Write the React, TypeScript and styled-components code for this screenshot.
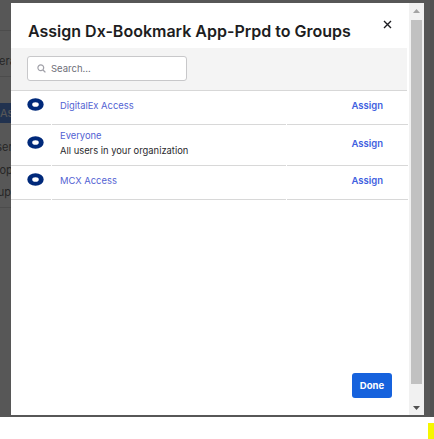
import React from 'react';
import styled, {createGlobalStyle} from 'styled-components';

const GlobalStyle = createGlobalStyle`
  html, body {
    margin: 0;
    padding: 0;
    background: #ffffff;
    font-family: Inter, "Liberation Sans", sans-serif;
    color: #1d1d21;
  }
`;

const Screen = styled.div`
  position: relative;
  height: 417px;
  overflow: hidden;
  display: flex;
`;

// page that sits behind the dimmed overlay
const PageNav = styled.div`
  display: flex;
  flex-direction: column;
  margin-left: -22px;
  width: 140px;
  padding-top: 30px;
`;

const NavTop = styled.div`
  border-top: 1px solid #d0d0d0;
  border-bottom: 1px solid #d0d0d0;
  height: 47px;
  box-sizing: border-box;
  padding-bottom: 8px;
  display: flex;
  align-items: flex-end;
  font-size: 11px;
  white-space: nowrap;
  color: #2a2a2a;
`;

const NavButton = styled.div`
  margin-top: 26px;
  height: 20px;
  line-height: 20px;
  background: #1662dd;
  color: #ffffff;
  font-size: 11px;
  padding-left: 22px;
  white-space: nowrap;
`;

const NavList = styled.div`
  display: flex;
  flex-direction: column;
  padding-top: 13px;
  border-bottom: 1px solid #d0d0d0;
  padding-bottom: 3px;
`;

const NavItem = styled.div<{ $indent: number }>`
  font-size: 11px;
  line-height: 22.5px;
  white-space: nowrap;
  padding-left: ${p => p.$indent}px;
  color: #2a2a2a;
`;

const PageMain = styled.div`
  flex: 1;
`;

const PageScroll = styled.div`
  width: 4px;
  background: #e6e6e6;
`;

const Overlay = styled.div`
  position: absolute;
  inset: 0;
  background: rgba(36, 36, 36, 0.77);
`;

const Modal = styled.div`
  position: absolute;
  left: 11px;
  top: 3px;
  width: 413px;
  height: 412px;
  background: #ffffff;
  display: flex;
`;

const ModalBody = styled.div`
  flex: 1;
  display: flex;
  flex-direction: column;
  overflow: hidden;
`;

const Header = styled.div`
  height: 45px;
  flex-shrink: 0;
  display: flex;
  align-items: center;
  justify-content: space-between;
  padding: 0 17px;
  box-sizing: border-box;
`;

const Title = styled.h2`
  margin: 0;
  padding-top: 10px;
  font-size: 16px;
  font-weight: 600;
  color: #1d1d21;
  white-space: nowrap;
`;

const CloseButton = styled.button`
  border: 0;
  background: none;
  padding: 0;
  margin-top: -2px;
  width: 10px;
  height: 10px;
  display: flex;
  align-items: center;
  justify-content: center;
  cursor: pointer;
`;

const SearchBar = styled.div`
  background: #f4f4f4;
  border-bottom: 1px solid #d7d7d7;
  padding: 8px 16px 9px;
  margin-right: 2px;
`;

const SearchField = styled.label`
  width: 160px;
  height: 25px;
  box-sizing: border-box;
  border: 1px solid #c8c8ca;
  border-radius: 3px;
  background: #ffffff;
  display: flex;
  align-items: center;
  gap: 5px;
  padding-left: 9px;
`;

const SearchInput = styled.input`
  border: 0;
  outline: none;
  padding: 0;
  font-family: inherit;
  font-size: 9.5px;
  width: 100px;
  color: #1d1d21;

  &::placeholder {
    color: #6e6e78;
  }
`;

const Row = styled.div`
  display: grid;
  grid-template-columns: 40px 234px 121px;
  column-gap: 1px;
`;

const Cell = styled.div<{ $align?: 'start' | 'end' }>`
  border-bottom: 1px solid #d8d8d8;
  min-height: 34px;
  box-sizing: border-box;
  padding: 3px 0 7px;
  display: flex;
  flex-direction: column;
  justify-content: center;
  align-items: ${p => (p.$align === 'end' ? 'flex-end' : 'flex-start')};
`;

const RadioCell = styled(Cell)`
  padding-left: 16px;
  padding-bottom: 9px;
`;

const NameCell = styled(Cell)`
  padding-left: 8px;
`;

const ActionCell = styled(Cell)`
  padding-right: 25px;
`;

const GroupName = styled.a`
  font-size: 9.4px;
  line-height: 15px;
  color: #5363d3;
  text-decoration: none;
`;

const GroupDesc = styled.div`
  font-size: 9.4px;
  line-height: 15px;
  color: #2a2a2e;
`;

const AssignLink = styled.a`
  font-size: 9.5px;
  line-height: 15px;
  font-weight: 600;
  color: #3f5fe0;
  text-decoration: none;
`;

const Footer = styled.div`
  margin-top: auto;
  display: flex;
  justify-content: flex-end;
  padding: 0 17px 17px;
`;

const DoneButton = styled.button`
  width: 40px;
  height: 25px;
  border: 0;
  border-radius: 3px;
  background: #1662dd;
  color: #ffffff;
  font-family: inherit;
  font-size: 9.5px;
  font-weight: 700;
  cursor: pointer;
`;

const ScrollRail = styled.div`
  width: 15px;
  flex-shrink: 0;
  background: #f1f1f1;
  display: flex;
  flex-direction: column;
`;

const ScrollArrow = styled.div`
  height: 15px;
  flex-shrink: 0;
  display: flex;
  align-items: center;
  justify-content: center;
`;

const ScrollThumb = styled.div`
  height: 364px;
  margin: 2px 2px 0;
  background: #c1c1c1;
`;

const ScrollTrack = styled.div`
  flex: 1;
`;

const BottomStrip = styled.div`
  display: flex;
  justify-content: flex-end;
  padding-top: 6px;
`;

const Marker = styled.div`
  width: 6px;
  height: 16px;
  background: #f6f600;
`;

const GroupIcon: React.FC = () => (
  <svg width="17" height="13" viewBox="0 0 17 13">
    <path
      fillRule="evenodd"
      fill="#00297a"
      d="M8.5 0.3A8.2 6.2 0 1 1 8.5 12.7A8.2 6.2 0 1 1 8.5 0.3ZM8.5 4.2A3.3 2.3 0 1 0 8.5 8.8A3.3 2.3 0 1 0 8.5 4.2Z"
    />
  </svg>
);

const SearchIcon: React.FC = () => (
  <svg width="9" height="9" viewBox="0 0 9 9">
    <circle cx="3.8" cy="3.8" r="2.9" fill="none" stroke="#a0a0a8" strokeWidth="1.2" />
    <line x1="6" y1="6" x2="8.4" y2="8.4" stroke="#a0a0a8" strokeWidth="1.3" />
  </svg>
);

const CloseIcon: React.FC = () => (
  <svg width="9" height="9" viewBox="0 0 9 9">
    <path d="M1 1L8 8M8 1L1 8" stroke="#1d1d21" strokeWidth="1.4" />
  </svg>
);

const ArrowIcon: React.FC<{ down?: boolean; color: string }> = ({down, color}) => (
  <svg width="7" height="4" viewBox="0 0 7 4">
    <path d={down ? 'M0 0H7L3.5 4Z' : 'M0 4H7L3.5 0Z'} fill={color} />
  </svg>
);

const groups = [
  {name: 'DigitalEx Access'},
  {name: 'Everyone', description: 'All users in your organization'},
  {name: 'MCX Access'},
];

const App: React.FC = () => (
  <>
    <GlobalStyle />
    <Screen>
      <PageNav>
        <NavTop>General</NavTop>
        <NavButton>Assign</NavButton>
        <NavList>
          <NavItem $indent={10}>Users</NavItem>
          <NavItem $indent={8}>People</NavItem>
          <NavItem $indent={1}>Groups</NavItem>
        </NavList>
      </PageNav>
      <PageMain />
      <PageScroll />
      <Overlay />
      <Modal>
        <ModalBody>
          <Header>
            <Title>Assign Dx-Bookmark App-Prpd to Groups</Title>
            <CloseButton type="button" aria-label="Close">
              <CloseIcon />
            </CloseButton>
          </Header>
          <SearchBar>
            <SearchField>
              <SearchIcon />
              <SearchInput placeholder="Search..." />
            </SearchField>
          </SearchBar>
          {groups.map(group => (
            <Row key={group.name}>
              <RadioCell>
                <GroupIcon />
              </RadioCell>
              <NameCell>
                <GroupName href="#">{group.name}</GroupName>
                {group.description && <GroupDesc>{group.description}</GroupDesc>}
              </NameCell>
              <ActionCell $align="end">
                <AssignLink href="#">Assign</AssignLink>
              </ActionCell>
            </Row>
          ))}
          <Footer>
            <DoneButton type="button">Done</DoneButton>
          </Footer>
        </ModalBody>
        <ScrollRail>
          <ScrollArrow>
            <ArrowIcon color="#a3a3a3" />
          </ScrollArrow>
          <ScrollThumb />
          <ScrollTrack />
          <ScrollArrow>
            <ArrowIcon down color="#505050" />
          </ScrollArrow>
        </ScrollRail>
      </Modal>
    </Screen>
    <BottomStrip>
      <Marker />
    </BottomStrip>
  </>
);

export default App;
